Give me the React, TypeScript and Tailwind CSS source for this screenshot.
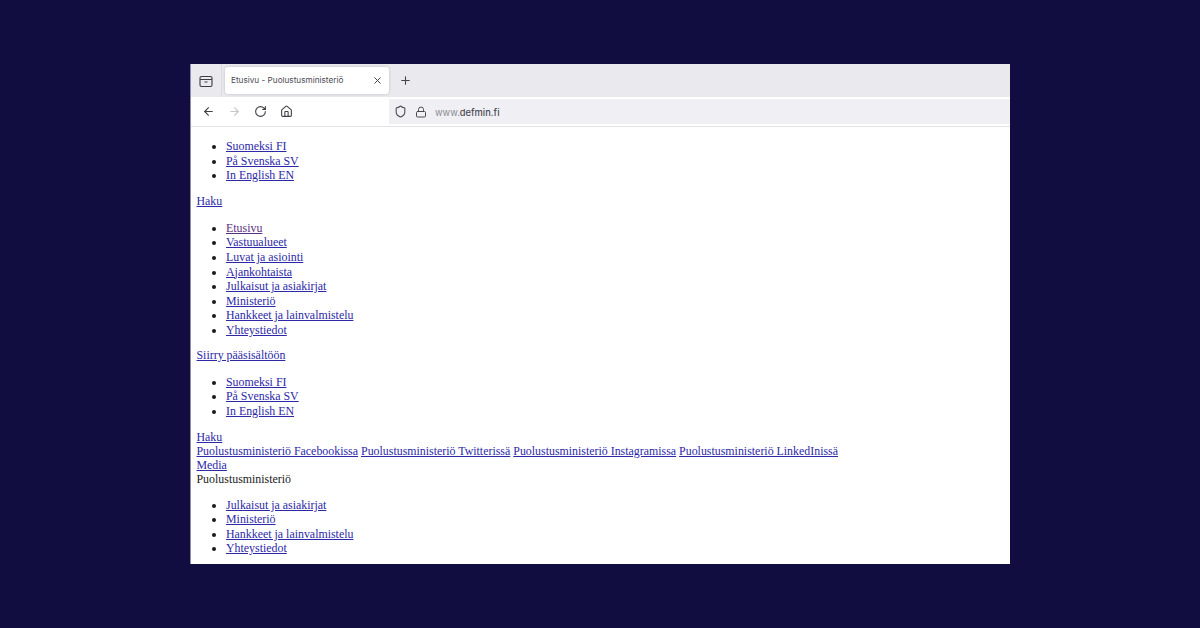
import React from 'react';
import { ArrowLeft, ArrowRight, RotateCw, Home, Shield, Lock, Plus, X } from 'lucide-react';

const lang = ['Suomeksi FI', 'På Svenska SV', 'In English EN'];
const mainNav = ['Vastuualueet', 'Luvat ja asiointi', 'Ajankohtaista', 'Julkaisut ja asiakirjat', 'Ministeriö', 'Hankkeet ja lainvalmistelu', 'Yhteystiedot'];
const subNav = ['Julkaisut ja asiakirjat', 'Ministeriö', 'Hankkeet ja lainvalmistelu', 'Yhteystiedot'];
const social = ['Puolustusministeriö Facebookissa', 'Puolustusministeriö Twitterissä', 'Puolustusministeriö Instagramissa', 'Puolustusministeriö LinkedInissä'];

function Item({ text, visited }: { text: string; visited?: boolean }) {
  return (
    <li className="h-[14.6px] leading-[14.6px]">
      <a href="#" className={`underline ${visited ? 'text-[#5b2f80]' : 'text-[#2c28a8]'}`}>{text}</a>
    </li>
  );
}

function Links({ items, first }: { items: string[]; first?: string }) {
  return (
    <ul className="list-disc pl-[29.5px]">
      {first && <Item text={first} visited />}
      {items.map((t) => <Item key={t} text={t} />)}
    </ul>
  );
}

function A({ children }: { children: React.ReactNode }) {
  return <a href="#" className="text-[#2c28a8] underline">{children}</a>;
}

export default function App() {
  return (
    <div className="h-[628px] w-[1200px] bg-[#110d40] pt-16 pl-[190px] overflow-hidden">
      <div className="flex h-[500px] w-[820px] flex-col border-l border-[#8f8fa8] bg-white">
        {/* tab strip */}
        <div className="flex h-[33px] items-center bg-[#e9e9ee] font-['Inter',sans-serif]">
          <div className="flex h-full w-[31px] items-center justify-center border-r border-[#dcdce2] text-[#3b3b45]">
            <svg width="14" height="14" viewBox="0 0 14 14" fill="none" stroke="currentColor" strokeWidth="1.1">
              <rect x="1" y="2.5" width="12" height="10" rx="1.5" />
              <path d="M1 5.5h12M5.5 8h3" />
            </svg>
          </div>
          <div className="ml-[3px] flex h-[27px] w-[164px] items-center justify-between rounded-[3px] bg-white pl-[6px] pr-[6px] shadow-[0_0_3px_rgba(0,0,0,0.2)]">
            <span className="text-[8.2px] text-[#4a4a52]">Etusivu - Puolustusministeriö</span>
            <X size={11} className="text-[#33333c]" />
          </div>
          <Plus size={13} className="ml-[10px] text-[#44444e]" />
        </div>
        {/* nav row */}
        <div className="flex h-[30px] items-center border-b border-[#e4e4e8] font-['Inter',sans-serif]">
          <div className="flex w-[198px] items-center pl-[11px] text-[#3f3f48]">
            <ArrowLeft size={13} />
            <ArrowRight size={13} className="ml-[13px] text-[#c4c4ca]" />
            <RotateCw size={13} className="ml-[13px]" />
            <Home size={13} className="ml-[13px]" />
          </div>
          <div className="flex h-[25px] flex-1 items-center bg-[#f0f0f4] pl-[5px] text-[#4a4a52]">
            <Shield size={13} />
            <Lock size={12} className="ml-[8px]" />
            <span className="ml-[8px] pt-[3px] text-[9.3px] text-[#8a8a92]">www.<span className="font-medium text-[#4a4a52]">defmin.fi</span></span>
          </div>
        </div>
        {/* page */}
        <div className="pl-[5.5px] pt-[12px] font-['Liberation_Serif',serif] text-[11.9px] text-[#1a1a1a]">
          <Links items={lang} />
          <p className="mt-[11.4px] h-[14.6px] leading-[14.6px]"><A>Haku</A></p>
          <div className="mt-[12px]">
            <Links first="Etusivu" items={mainNav} />
          </div>
          <p className="mt-[10.4px] h-[14.6px] leading-[14.6px]"><A>Siirry pääsisältöön</A></p>
          <div className="mt-[12px]">
            <Links items={lang} />
          </div>
          <div className="mt-[11.4px] leading-[14px]">
            <div><A>Haku</A></div>
            <div className="flex gap-[3px]">
              {social.map((s) => <A key={s}>{s}</A>)}
            </div>
            <div><A>Media</A></div>
            <div>Puolustusministeriö</div>
          </div>
          <div className="mt-[12px]">
            <Links items={subNav} />
          </div>
        </div>
      </div>
    </div>
  );
}
